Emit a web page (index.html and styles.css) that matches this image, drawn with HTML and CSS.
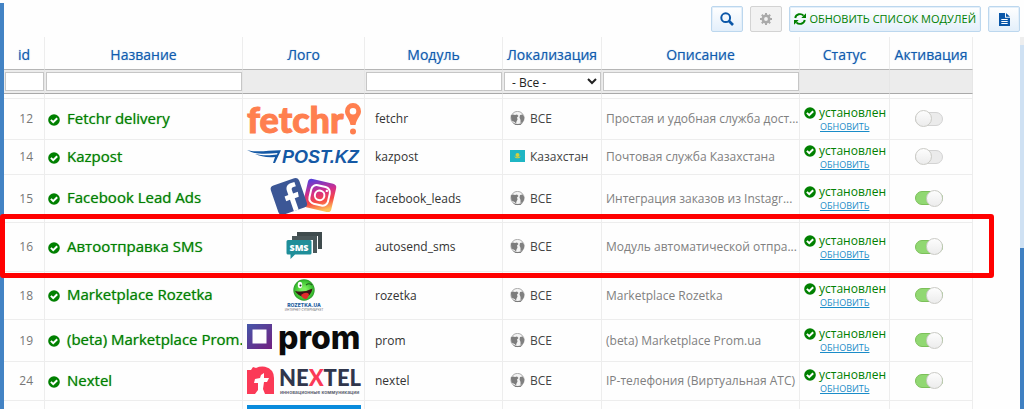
FILE: index.html
```html
<!DOCTYPE html>
<html lang="ru">
<head>
<meta charset="utf-8">
<title>Модули</title>
<link rel="stylesheet" href="styles.css">
</head>
<body>
<svg class="sprite" aria-hidden="true">
  <symbol id="ok" viewBox="0 0 12 12"><circle cx="6" cy="6" r="5.8" fill="#008000"/><path d="M2.9 5.9 5.2 8.2 9.2 4.2" fill="none" stroke="#fff" stroke-width="2"/></symbol>
  <symbol id="globe" viewBox="0 0 15 15"><circle cx="7.5" cy="7" r="6.600" fill="#f4f4f4" stroke="#999" stroke-width=".8"/><path d="M.8 4.500 3 3.500 5 4 7 3.500 8.500 5 7 6.500 7.500 8.500 6.500 10.500 6 12.500 4.500 11 1.500 9.500Z" fill="#7c7c7c"/><path d="M10 4 12.500 3.500 14.300 6 14 9 12.500 11.500 10.500 12 10.500 9 9.500 6.500Z" fill="#808080"/><path d="M2.500 11.500Q8 14.500 13 11.500L10.500 14 5.500 14Z" fill="#7c7c7c"/></symbol>
  <symbol id="flag" viewBox="0 0 15 15"><path fill="#1fb6c4" d="M0 1h15v12H0z"/><circle cx="7.500" cy="6" r="2" fill="#d5cf3e"/><path d="M4 6.500Q5 9.500 7.500 9.200 10 9.500 11 6.500 10 8.300 7.500 8.200 5 8.300 4 6.500" fill="#d5cf3e"/></symbol>
</svg>
<div class="page">
  <div class="rail"></div>
  <div class="toolbar">
    <button class="btn" type="button" aria-label="Поиск"><svg width="14" height="14" viewBox="0 0 14 14"><circle cx="5.700" cy="5.700" r="4.400" fill="none" stroke="#0b57a8" stroke-width="2"/><path d="M9 9 13 13" stroke="#0b57a8" stroke-width="2.600"/></svg></button>
    <button class="btn btn-off" type="button" aria-label="Настройки"><svg width="12" height="12" viewBox="0 0 12 12"><circle cx="6" cy="6" r="3.200" fill="none" stroke="#aaa" stroke-width="2.600"/><path d="M6 0v2.500M6 9.500V12M0 6h2.500M9.500 6H12M1.800 1.800l1.700 1.700M8.500 8.500l1.700 1.700M1.800 10.200l1.700-1.700M8.500 3.500l1.700-1.700" stroke="#aaa" stroke-width="2"/></svg></button>
    <button class="btn btn-refresh" type="button"><svg width="12" height="12" viewBox="0 0 12 12"><path d="M1.200 5A4.900 4.900 0 0 1 9.600 2.700M10.800 7A4.900 4.900 0 0 1 2.400 9.300" fill="none" stroke="#008000" stroke-width="1.900"/><path d="M12 .3V5H7.300ZM0 11.700V7h4.700Z" fill="#008000"/></svg>Обновить список модулей</button>
    <button class="btn" type="button" aria-label="Документация"><svg width="11" height="13" viewBox="0 0 11 13"><path d="M0 0h6v4.700h5V13H0ZM7 0l4 3.800H7Z" fill="#0b57a8"/><path d="M2.300 6.500h6.400M2.300 8.500h6.400M2.300 10.500h6.400" stroke="#fff"/></svg></button>
  </div>
  <div class="content">
    <table class="grid">
      <colgroup><col class="c-id"><col><col class="c-logo"><col class="c-mod"><col class="c-loc"><col><col class="c-stat"><col class="c-act"></colgroup>
      <thead>
        <tr class="head"><th>id</th><th>Название</th><th>Лого</th><th>Модуль</th><th>Локализация</th><th>Описание</th><th>Статус</th><th>Активация</th></tr>
        <tr class="filter">
          <td><input type="text" aria-label="id"></td>
          <td><input type="text" aria-label="Название"></td>
          <td></td>
          <td><input type="text" aria-label="Модуль"></td>
          <td><select aria-label="Локализация"><option>- Все -</option></select></td>
          <td><input type="text" aria-label="Описание"></td>
          <td></td><td></td>
        </tr>
      </thead>
      <tbody>
        <tr class="gap"><td></td><td></td><td></td><td></td><td></td><td></td><td></td><td></td></tr>
        <tr>
          <td class="id">12</td>
          <td class="name"><svg class="ok"><use href="#ok"/></svg>Fetchr delivery</td>
          <td class="logo"><svg width="114" height="32" viewBox="0 0 114 32"><text class="t-fetchr" x="0" y="30">fetchr</text><path d="M106 0a8 8 0 0 1 8 8.300C114 13 110 15 108.500 22h-5C102 15 98 13 98 8.300A8 8 0 0 1 106 0ZM106 5a3.300 3.300 0 1 0 0 6.600A3.300 3.300 0 0 0 106 5Z" fill="#ff7f4f" fill-rule="evenodd"/><circle cx="106" cy="28.500" r="3" fill="#ff7f4f"/></svg></td>
          <td class="mod">fetchr</td>
          <td class="loc"><svg class="globe"><use href="#globe"/></svg>ВСЕ</td>
          <td class="desc">Простая и удобная служба дост...</td>
          <td class="stat"><svg class="ok"><use href="#ok"/></svg>установлен<a href="#">обновить</a></td>
          <td class="act"><input type="checkbox" aria-label="Активация fetchr"></td>
        </tr>
        <tr>
          <td class="id">14</td>
          <td class="name"><svg class="ok"><use href="#ok"/></svg>Kazpost</td>
          <td class="logo"><svg width="114" height="14" viewBox="0 0 114 14"><path d="M0 0C10 3 23 0 34 .3L28 13 26 13 28 7C20 8 13 6 8 4 17 6 25 5 30 4.500L30.500 3C20 4 8 5 0 0Z" fill="#1559a5"/><text class="t-post" x="35" y="13">POST.KZ</text></svg></td>
          <td class="mod">kazpost</td>
          <td class="loc"><svg class="globe"><use href="#flag"/></svg>Казахстан</td>
          <td class="desc">Почтовая служба Казахстана</td>
          <td class="stat"><svg class="ok"><use href="#ok"/></svg>установлен<a href="#">обновить</a></td>
          <td class="act"><input type="checkbox" aria-label="Активация kazpost"></td>
        </tr>
        <tr>
          <td class="id">15</td>
          <td class="name"><svg class="ok"><use href="#ok"/></svg>Facebook Lead Ads</td>
          <td class="logo"><svg width="114" height="39" viewBox="0 0 114 39"><defs><linearGradient id="insta" x1=".2" y1="0" x2=".7" y2="1"><stop offset="0" stop-color="#5b3fd8"/><stop offset=".4" stop-color="#d32e8b"/><stop offset=".7" stop-color="#f74a45"/><stop offset="1" stop-color="#fdc259"/></linearGradient></defs>
            <g transform="rotate(13 73 17)"><rect x="58" y="2" width="29" height="29" rx="4" fill="url(#insta)"/><rect x="63" y="7" width="19" height="19" rx="5.500" fill="none" stroke="#fff" stroke-width="2"/><circle cx="72.500" cy="16.500" r="4.800" fill="none" stroke="#fff" stroke-width="2"/><circle cx="78.500" cy="10.500" r="1.200" fill="#fff"/></g>
            <g transform="rotate(-19 42 18)"><rect x="27" y="2" width="30" height="31" rx="4" fill="#3c5796"/><path d="M42 33V21h-4v-5h4v-4c0-4.500 2.500-6.500 6.500-6.500h3.500V10h-2.500c-2 0-2.500 1-2.500 2.500V16h5l-.7 5H47v12Z" fill="#fff"/></g></svg></td>
          <td class="mod">facebook_leads</td>
          <td class="loc"><svg class="globe"><use href="#globe"/></svg>ВСЕ</td>
          <td class="desc">Интеграция заказов из Instagr...</td>
          <td class="stat"><svg class="ok"><use href="#ok"/></svg>установлен<a href="#">обновить</a></td>
          <td class="act"><input type="checkbox" checked aria-label="Активация facebook_leads"></td>
        </tr>
        <tr class="marked">
          <td class="id">16<span class="frame"></span></td>
          <td class="name"><svg class="ok"><use href="#ok"/></svg>Автоотправка SMS</td>
          <td class="logo"><svg width="114" height="40" viewBox="0 0 114 40"><path d="M50 5h25v17h-4V9H50Z" fill="#3f4b4d"/><path d="M45 9h25v17h-4V13H45Z" fill="#4a5759"/><path d="M41 13h22a1.500 1.500 0 0 1 1.500 1.500V26a1.500 1.500 0 0 1-1.500 1.500H48L43.500 32V27.500H41A1.500 1.500 0 0 1 39.500 26V14.500A1.500 1.500 0 0 1 41 13Z" fill="#1f8e99"/><text class="t-sms" x="52" y="24">SMS</text></svg></td>
          <td class="mod">autosend_sms</td>
          <td class="loc"><svg class="globe"><use href="#globe"/></svg>ВСЕ</td>
          <td class="desc">Модуль автоматической отпра...</td>
          <td class="stat"><svg class="ok"><use href="#ok"/></svg>установлен<a href="#">обновить</a></td>
          <td class="act"><input type="checkbox" checked aria-label="Активация autosend_sms"></td>
        </tr>
        <tr>
          <td class="id">18</td>
          <td class="name"><svg class="ok"><use href="#ok"/></svg>Marketplace Rozetka</td>
          <td class="logo"><svg width="114" height="39" viewBox="0 0 114 39"><defs><radialGradient id="smile"><stop offset=".2" stop-color="#7df05f"/><stop offset=".8" stop-color="#3fc433"/><stop offset="1" stop-color="#2c9a2a"/></radialGradient></defs><circle cx="57" cy="14" r="10.700" fill="url(#smile)"/><ellipse cx="53" cy="9" rx="2.200" ry="3.300" fill="#fff"/><circle cx="53.500" cy="9.500" r="1" fill="#222"/><path d="M59 9Q62 6.500 65 9" fill="none" stroke="#24621f" stroke-width="1.200"/><path d="M48 15Q57 17 65.500 12.500 64 21 57 21 51 20 48 15Z" fill="#3a1616"/><path d="M54 19Q59 15 62 18 61 23.500 58 23 55 22 54 19Z" fill="#e12b2b"/><text class="t-roz" x="57" y="31">ROZETKA.UA</text><text class="t-tiny" x="57" y="35">ИНТЕРНЕТ-СУПЕРМАРКЕТ</text></svg></td>
          <td class="mod">rozetka</td>
          <td class="loc"><svg class="globe"><use href="#globe"/></svg>ВСЕ</td>
          <td class="desc">Marketplace Rozetka</td>
          <td class="stat"><svg class="ok"><use href="#ok"/></svg>установлен<a href="#">обновить</a></td>
          <td class="act"><input type="checkbox" checked aria-label="Активация rozetka"></td>
        </tr>
        <tr>
          <td class="id">19</td>
          <td class="name"><svg class="ok"><use href="#ok"/></svg>(beta) Marketplace Prom.ua</td>
          <td class="logo"><svg width="114" height="33" viewBox="0 0 114 33"><defs><linearGradient id="prom" x1="0" y1="0" x2="1" y2="1"><stop offset="0" stop-color="#4557a9"/><stop offset="1" stop-color="#722080"/></linearGradient></defs><path d="M0 0h25v25H0ZM5.500 5.500v14h14v-14Z" fill="url(#prom)" fill-rule="evenodd"/><text class="t-prom" x="31" y="25">prom</text></svg></td>
          <td class="mod">prom</td>
          <td class="loc"><svg class="globe"><use href="#globe"/></svg>ВСЕ</td>
          <td class="desc">(beta) Marketplace Prom.ua</td>
          <td class="stat"><svg class="ok"><use href="#ok"/></svg>установлен<a href="#">обновить</a></td>
          <td class="act"><input type="checkbox" checked aria-label="Активация prom"></td>
        </tr>
        <tr>
          <td class="id">24</td>
          <td class="name"><svg class="ok"><use href="#ok"/></svg>Nextel</td>
          <td class="logo"><svg width="114" height="30" viewBox="0 0 114 30"><path d="M0 4 4 4 6 1 9 2Q13 0 18 .7 27 3 27 12V28H0Z" fill="#fb3a57"/><path d="M14 9 17 7 17 12 22 12 20 16 17 16 16 23 18 28H8L11 24 11 17 7 17 8 13 13 12Z" fill="#fff"/><text class="t-next" x="32" y="20">NE<tspan fill="#fb3a57">X</tspan>TEL</text><text class="t-sub" x="33" y="28">инновационные коммуникации</text></svg></td>
          <td class="mod">nextel</td>
          <td class="loc"><svg class="globe"><use href="#globe"/></svg>ВСЕ</td>
          <td class="desc">IP-телефония (Виртуальная АТС)</td>
          <td class="stat"><svg class="ok"><use href="#ok"/></svg>установлен<a href="#">обновить</a></td>
          <td class="act"><input type="checkbox" checked aria-label="Активация nextel"></td>
        </tr>
        <tr>
          <td></td><td></td>
          <td class="logo"><svg width="114" height="30" viewBox="0 0 114 30"><path fill="#098bdc" d="M0 0h114v30H0z"/></svg></td>
          <td></td><td></td><td></td><td></td><td></td>
        </tr>
      </tbody>
    </table>
  </div>
  <div class="scroll"><div class="scroll-cap"></div><div class="scroll-track"></div><div class="scroll-thumb"></div></div>
</div>
</body>
</html>
```
FILE: styles.css
```css
* { box-sizing: border-box; }
body {
  margin: 0;
  height: 100vh;
  overflow: hidden;
  background: #fefefe;
  font: 12px/18px "Open Sans", "Noto Sans", sans-serif;
  color: #333;
}
.sprite { position: absolute; width: 0; height: 0; }
.page {
  display: grid;
  grid-template: 37px minmax(0, 1fr) / 4px minmax(0, 1fr) 4px;
  height: 100vh;
  overflow: hidden;
}
.rail { grid-row: 1 / 3; margin-top: 3px; background: #4383c4; }
.toolbar {
  grid-column: 2;
  display: flex;
  justify-content: flex-end;
  gap: 7px;
  padding: 6px 0 5px;
}
.btn {
  display: flex;
  align-items: center;
  justify-content: center;
  gap: 3px;
  min-width: 32px;
  padding: 0;
  border: 1px solid #bcd7ee;
  border-radius: 2px;
  background: linear-gradient(#fff, #e3effb);
  box-shadow: inset 0 0 0 1px #e3effa;
  font: inherit;
}
.btn-off { border-color: #d3d3d3; background: #f2f2f2; box-shadow: none; }
.btn-refresh { padding: 0 4px; color: #008000; font-size: 11px; text-transform: uppercase; }
.content { grid-area: 2 / 2; padding-right: 47px; }
.scroll { grid-area: 2 / 3; display: flex; flex-direction: column; }
.scroll-cap { height: 8px; background: #eee; }
.scroll-track { flex: 203; background: #cfe1f3; }
.scroll-thumb { flex: 161; background: #3f80c2; }

.grid { width: 100%; table-layout: fixed; border-collapse: separate; border-spacing: 0; }
.c-id { width: 41px; }
.c-logo { width: 122px; }
.c-mod { width: 138px; }
.c-loc { width: 99px; }
.c-stat { width: 90px; }
.c-act { width: 83px; }
th, td {
  padding: 0;
  border: 0 solid #ededed;
  border-width: 0 1px 1px 0;
  overflow: hidden;
  white-space: nowrap;
  text-align: left;
}
th {
  height: 33px;
  padding-top: 3px;
  border-bottom-color: #b5b5b5;
  color: #0f5cb0;
  font-size: 14px;
  font-weight: 500;
  text-align: center;
  text-shadow: 0 0 1px #0f5cb080;
}
.filter td { height: 24px; padding: 2px 0 2px 1px; border-bottom-color: #a9a9a9; border-right-color: #e6e6e6; background: #ececec; }
.filter input, .filter select {
  display: block;
  width: 100%;
  height: 19px;
  border: 1px solid #c6c6c6;
  border-radius: 0;
  background: #fff;
  color: #222;
  font: 12px "Open Sans", sans-serif;
}
.filter select { padding: 0 0 0 3px; }
.gap td { height: 5px; }
tbody tr:not(.gap) td { height: 35px; }
.id { padding-right: 11px; color: #777; text-align: right; }
.name { padding: 0 0 3px 3px; color: #008000; font-size: 15px; font-weight: 500; text-shadow: 0 0 1px #008000a0; }
.name .ok { margin-right: 7px; }
.ok { width: 12px; height: 12px; vertical-align: -2px; }
.logo { padding: 4px; }
.logo svg { display: block; overflow: visible; }
.mod { padding-left: 10px; }
.loc { padding-left: 7px; color: #444; }
.globe { width: 15px; height: 15px; margin-right: 5px; vertical-align: -3px; }
.desc { padding-left: 4px; color: #808080; text-overflow: ellipsis; }
.stat { padding-left: 4px; color: #008000; line-height: 14px; }
.stat .ok { margin-right: 3px; }
.stat a { display: block; padding-left: 16px; color: #1a8cc8; font-size: 9px; line-height: 13px; text-transform: uppercase; }
.act { padding: 0 4px 1px 0; }
.act input {
  appearance: none;
  display: flex;
  align-items: center;
  width: 28px;
  height: 14px;
  margin: 0 auto;
  border: 1px solid #d3d3d3;
  border-radius: 7px;
  background: #ebebeb;
}
.act input::before {
  content: "";
  width: 15px;
  height: 15px;
  flex: none;
  margin: 0 -1px;
  border: 1px solid #cbcbc6;
  border-radius: 50%;
  background: linear-gradient(#fdfdfd, #ececec);
}
.act input:checked { justify-content: flex-end; border-color: #7cbf5a; background: #91d872; }
.marked { position: relative; }
.frame {
  position: absolute;
  inset: -9px -21px -6px -4px;
  border: 5px solid #f00;
  border-radius: 3px;
}
.t-fetchr { font: 900 36px Lato, sans-serif; fill: #ff7f4f; stroke: #ff7f4f; stroke-width: 1px; }
.t-post { font: italic bold 18px "Liberation Sans", sans-serif; fill: #1559a5; }
.t-sms { font: 800 9px "Open Sans", sans-serif; fill: #fff; text-anchor: middle; }
.t-roz { font: 800 5px Inter, sans-serif; fill: #235f9f; text-anchor: middle; }
.t-tiny { font: 3px Lato, sans-serif; fill: #777; text-anchor: middle; }
.t-prom { font: 800 32px Inter, sans-serif; fill: #0b0b0b; }
.t-next { font: 900 22px Lato, sans-serif; fill: #30364c; }
.t-sub { font: 600 5px Inter, sans-serif; fill: #555b6b; }
```
